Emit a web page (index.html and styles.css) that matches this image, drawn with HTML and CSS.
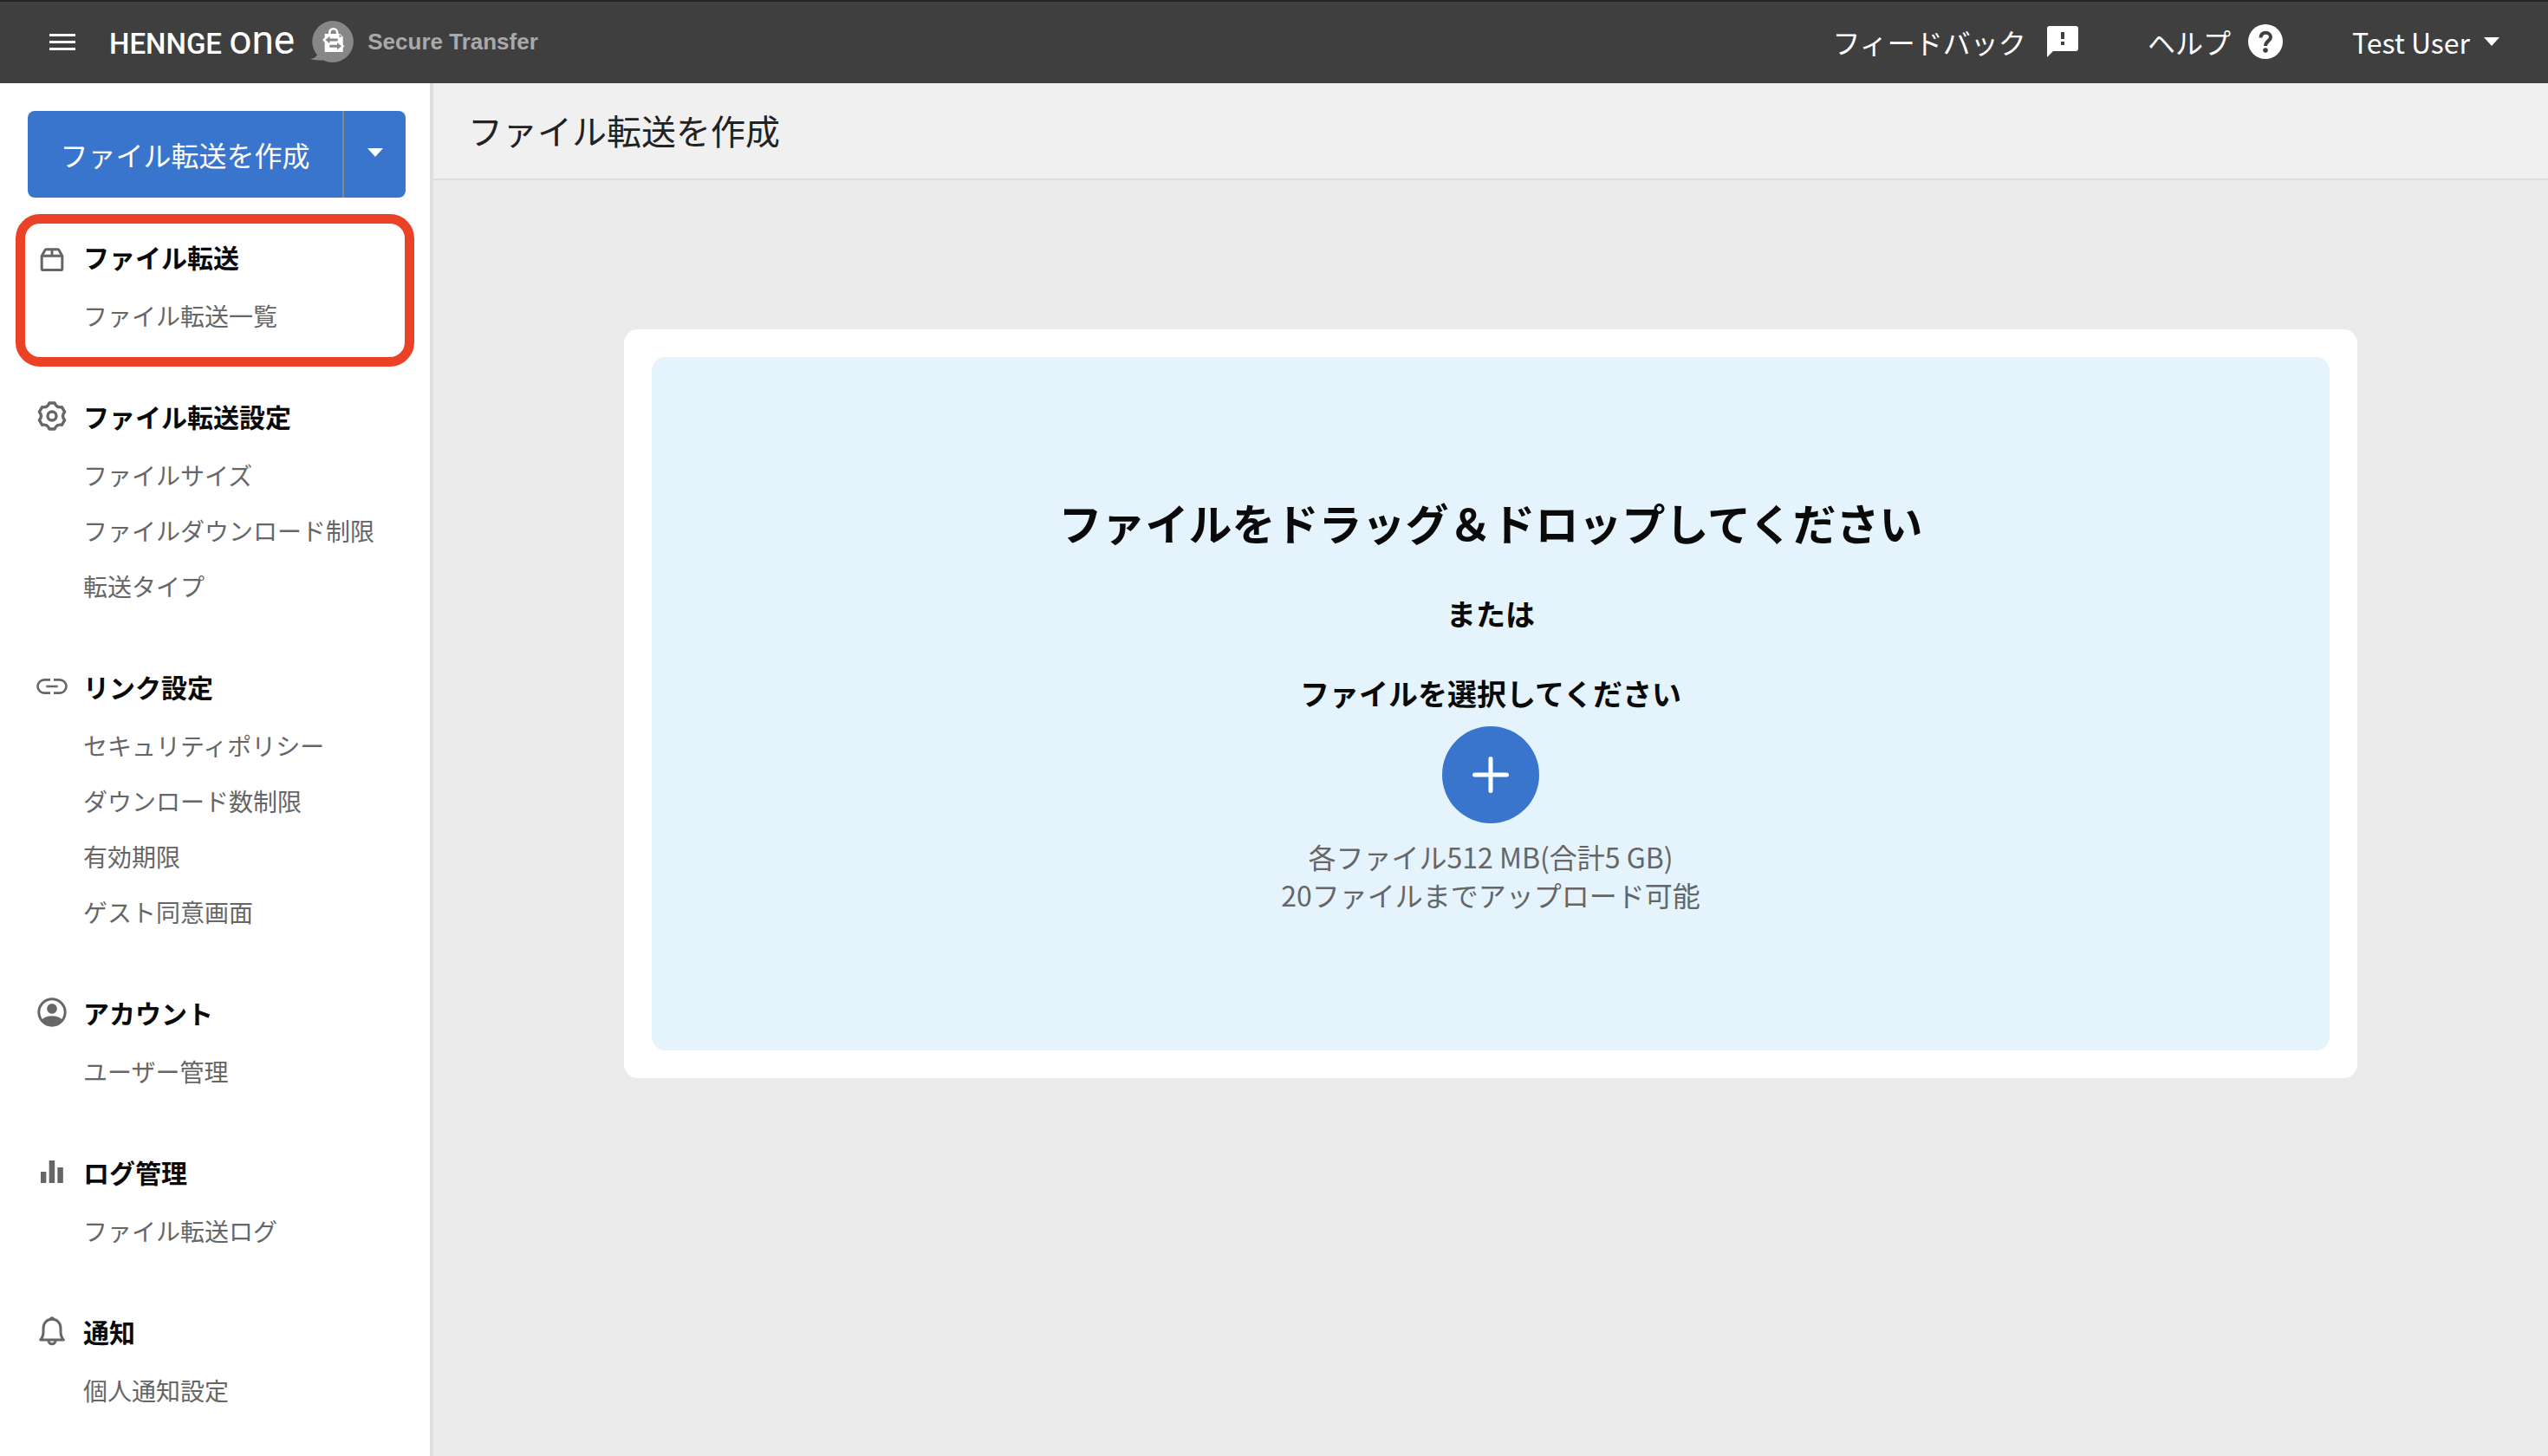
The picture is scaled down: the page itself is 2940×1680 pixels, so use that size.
FILE: index.html
```html
<!DOCTYPE html>
<html lang="ja">
<head>
<meta charset="utf-8">
<meta name="viewport" content="width=device-width, initial-scale=1">
<title>HENNGE One Secure Transfer</title>
<link rel="stylesheet" href="styles.css">
</head>
<body>
<header class="topbar">
  <button class="menu-button" type="button" aria-label="メニュー">
    <svg class="icon" viewBox="0 0 40 40" aria-hidden="true"><path fill="currentColor" d="M5 11h30v3H5zM5 19h30v3H5zM5 27h30v3H5z"/></svg>
  </button>
  <a class="brand" href="#">
    <span class="brand-name">HENNGE <span class="brand-one">one</span></span>
    <svg class="brand-badge" viewBox="0 0 52 48" aria-hidden="true">
      <path fill="#878787" d="M26 0a24 24 0 1 1-11 45.400Q8 46.200 0 44q6-1 8-4.500A24 24 0 0 1 26 0z"/>
      <path fill="none" stroke="#fff" stroke-width="2.600" d="M22.300 16v-2.400a4.400 4.400 0 0 1 8.800 0V16"/>
      <path fill="#fff" d="M16.700 15h17.500l3.500 3.500V36h-21z"/>
      <path fill="#fff" d="M14 22l5-5v10zM39.500 29.300l-5-5v10z"/>
      <path fill="#878787" d="M17.500 22l5-4.200v2.700h9.200v3h-9.200v2.700zM36 29.300l-5-4.200v2.700h-8.700v3H31v2.700zM33.500 15.500l3.200 3.200h-3.200z"/>
    </svg>
    <span class="brand-product">Secure Transfer</span>
  </a>
  <nav class="topbar-actions" aria-label="ユーティリティ">
    <a class="topbar-link" href="#">フィードバック
      <svg class="feedback-icon" viewBox="0 0 36 36" aria-hidden="true"><path fill="currentColor" fill-rule="evenodd" d="M3 0h30a3 3 0 0 1 3 3v23a3 3 0 0 1-3 3H7l-7 7V3a3 3 0 0 1 3-3zM16 7v8h4V7zM16 18v4h4v-4z"/></svg>
    </a>
    <a class="topbar-link help-link" href="#">ヘルプ
      <svg class="icon" viewBox="0 0 40 40" aria-hidden="true"><circle cx="20" cy="20" r="20" fill="currentColor"/><path fill="none" stroke="#3f3f3f" stroke-width="4" d="M14.500 15.500c0-8 11.500-7 11.500-.5 0 4-6 4.500-6 10"/><circle cx="20" cy="30" r="2.800" fill="#3f3f3f"/></svg>
    </a>
    <button class="topbar-link user-button" type="button">Test User
      <svg class="caret" viewBox="0 0 18 10" aria-hidden="true"><path fill="currentColor" d="M0 0h18l-9 10z"/></svg>
    </button>
  </nav>
</header>

<div class="layout">
  <aside class="sidebar">
    <div class="create">
      <button class="create-main" type="button">ファイル転送を作成</button>
      <button class="create-more" type="button" aria-label="その他">
        <svg class="caret" viewBox="0 0 18 10" aria-hidden="true"><path fill="currentColor" d="M0 0h18l-9 10z"/></svg>
      </button>
    </div>
    <nav class="menu" aria-label="メインメニュー">
      <section class="group group-marked">
        <h2 class="group-title">
          <svg class="icon" viewBox="0 0 24 24" aria-hidden="true"><g fill="none" stroke="currentColor" stroke-width="1.800" stroke-linejoin="round"><path d="M4.900 11.600h14.200v8.900q0 .8-.8.800H5.700q-.8 0-.8-.8z"/><path d="M4.900 11.600l2.400-4.200q.3-.4.800-.4h7.800q.5 0 .8.400l2.400 4.200M12 7v4.600"/></g></svg>
          ファイル転送
        </h2>
        <ul class="group-list">
          <li><a href="#">ファイル転送一覧</a></li>
        </ul>
      </section>
      <section class="group">
        <h2 class="group-title">
          <svg class="icon" viewBox="0 0 24 24" aria-hidden="true"><g fill="none" stroke="currentColor" stroke-width="2" stroke-linejoin="round"><path d="M10.100 3h3.800Q15.100 6.600 18.800 5.800L20.800 9.200Q18.200 12 20.800 14.800L18.800 18.200Q15.100 17.400 13.900 21H10.100Q8.900 17.400 5.200 18.200L3.200 14.800Q5.800 12 3.200 9.200L5.200 5.800Q8.900 6.600 10.100 3z"/><circle cx="12" cy="12" r="3"/></g></svg>
          ファイル転送設定
        </h2>
        <ul class="group-list">
          <li><a href="#">ファイルサイズ</a></li>
          <li><a href="#">ファイルダウンロード制限</a></li>
          <li><a href="#">転送タイプ</a></li>
        </ul>
      </section>
      <section class="group">
        <h2 class="group-title">
          <svg class="icon" viewBox="0 0 24 24" aria-hidden="true"><path fill="none" stroke="currentColor" stroke-width="1.600" d="M10.800 7.400H6.700a4.600 4.600 0 0 0 0 9.200h4.100M13.200 7.400h4.100a4.600 4.600 0 0 1 0 9.200h-4.100M8 12h8"/></svg>
          リンク設定
        </h2>
        <ul class="group-list">
          <li><a href="#">セキュリティポリシー</a></li>
          <li><a href="#">ダウンロード数制限</a></li>
          <li><a href="#">有効期限</a></li>
          <li><a href="#">ゲスト同意画面</a></li>
        </ul>
      </section>
      <section class="group">
        <h2 class="group-title">
          <svg class="icon" viewBox="0 0 24 24" aria-hidden="true"><circle cx="12" cy="12" r="9.100" fill="none" stroke="currentColor" stroke-width="1.800"/><circle cx="12" cy="9.500" r="3.500" fill="currentColor"/><path fill="currentColor" d="M4.800 17.200Q7.600 14.600 12 14.600t7.200 2.600A9.400 9.400 0 0 1 4.800 17.200z"/></svg>
          アカウント
        </h2>
        <ul class="group-list">
          <li><a href="#">ユーザー管理</a></li>
        </ul>
      </section>
      <section class="group">
        <h2 class="group-title">
          <svg class="icon" viewBox="0 0 24 24" aria-hidden="true"><path fill="currentColor" d="M4.200 12H8v7.800H4.200zM10 4.200h3.900v15.600H10zM15.800 9h3.900v10.800h-3.900z"/></svg>
          ログ管理
        </h2>
        <ul class="group-list">
          <li><a href="#">ファイル転送ログ</a></li>
        </ul>
      </section>
      <section class="group">
        <h2 class="group-title">
          <svg class="icon" viewBox="0 0 24 24" aria-hidden="true"><path fill="none" stroke="currentColor" stroke-width="1.800" stroke-linejoin="round" d="M4 18Q6 16 6 12.500V10c0-3.700 2.400-6.200 6-6.200s6 2.500 6 6.200v2.500q0 3.500 2 5.500z"/><path fill="currentColor" d="M10.300 3.600a1.700 1.700 0 0 1 3.400 0z"/><path fill="none" stroke="currentColor" stroke-width="1.800" d="M9.600 18.500a2.400 2.400 0 0 0 4.800 0"/></svg>
          通知
        </h2>
        <ul class="group-list">
          <li><a href="#">個人通知設定</a></li>
        </ul>
      </section>
    </nav>
  </aside>

  <main class="content">
    <h1 class="page-title">ファイル転送を作成</h1>
    <div class="content-body">
      <section class="card">
        <div class="dropzone">
          <h2 class="drop-heading">ファイルをドラッグ＆ドロップしてください</h2>
          <p class="drop-sub">または</p>
          <p class="drop-sub">ファイルを選択してください</p>
          <button class="add-button" type="button" aria-label="ファイルを選択">
            <svg class="plus" viewBox="0 0 42 42" aria-hidden="true"><path fill="none" stroke="currentColor" stroke-width="5" stroke-linecap="round" d="M21 2.500v37M2.500 21h37"/></svg>
          </button>
          <p class="drop-note">各ファイル512 MB(合計5 GB)<br>20ファイルまでアップロード可能</p>
        </div>
      </section>
    </div>
  </main>
</div>
</body>
</html>
```

FILE: styles.css
```css
* {
  box-sizing: border-box;
}

body {
  display: flex;
  flex-direction: column;
  min-height: 100vh;
  margin: 0;
  background: #ebebeb;
  color: #0a0a0a;
  font-family: "Noto Sans CJK JP", sans-serif;
  font-size: 32px;
}

h1, h2, p, ul {
  margin: 0;
  padding: 0;
}

ul {
  list-style: none;
}

a {
  color: inherit;
  text-decoration: none;
}

button {
  padding: 0;
  border: 0;
  background: none;
  color: inherit;
  font: inherit;
  cursor: pointer;
}

svg {
  display: block;
  flex: none;
}

.icon {
  width: 40px;
  height: 40px;
}

.caret {
  width: 18px;
  height: 10px;
}

/* Top bar */
.topbar {
  display: flex;
  align-items: center;
  height: 96px;
  padding: 0 56px 2px 52px;
  border-top: 2px solid #222;
  background: #3f3f3f;
  color: #fff;
}

.brand {
  display: flex;
  align-items: center;
  margin-left: 34px;
}

.brand-name {
  font-family: Roboto, sans-serif;
  font-size: 33px;
  font-weight: 500;
  line-height: 60px;
}

.brand-one {
  font-size: 46px;
  font-weight: 400;
}

.brand-badge {
  width: 52px;
  height: 48px;
  margin: 0 14px 0 18px;
}

.brand-product {
  color: #a9a9a9;
  font-family: "Liberation Sans", sans-serif;
  font-size: 26px;
  font-weight: 700;
}

.topbar-actions {
  display: flex;
  align-items: center;
  gap: 80px;
  margin-left: auto;
}

.topbar-link {
  display: flex;
  align-items: center;
  gap: 24px;
}

.help-link {
  gap: 20px;
}

.user-button {
  gap: 16px;
}

.feedback-icon {
  width: 36px;
  height: 36px;
}

/* Page frame */
.layout {
  display: flex;
  flex: 1;
}

.sidebar {
  flex: none;
  width: 500px;
  padding: 32px 28px 32px 32px;
  border-right: 4px solid #dedede;
  background: #fff;
}

.create {
  display: flex;
  height: 100px;
  margin-bottom: 32px;
  border-radius: 8px;
  background: #3974cd;
  color: #fff;
}

.create-main {
  flex: 1;
}

.create-more {
  display: flex;
  align-items: center;
  justify-content: center;
  width: 73px;
  padding-bottom: 4px;
  border-left: 2px solid #888;
}

/* Side menu */
.menu {
  display: flex;
  flex-direction: column;
  gap: 48px;
}

.group {
  position: relative;
  padding-left: 8px;
}

.group-marked::after {
  content: "";
  position: absolute;
  inset: -13px -10px -27px -14px;
  border: 11px solid #eb4127;
  border-radius: 28px;
  pointer-events: none;
}

.group-title {
  display: flex;
  align-items: center;
  gap: 16px;
  height: 72px;
  font-size: 30px;
  font-weight: 700;
}

.group-title .icon {
  color: #666;
}

.group-list {
  padding-left: 56px;
  color: #666;
  font-size: 28px;
  line-height: 64px;
}

.group-list a {
  display: block;
}

/* Content */
.content {
  flex: 1;
  min-width: 0;
}

.page-title {
  padding: 0 40px 2px;
  border-bottom: 2px solid #dedede;
  background: #f0f0f0;
  color: #222;
  font-size: 40px;
  font-weight: 400;
  line-height: 108px;
}

.content-body {
  padding: 172px 220px;
}

.card {
  padding: 32px;
  border-radius: 16px;
  background: #fff;
}

.dropzone {
  display: flex;
  flex-direction: column;
  align-items: center;
  min-height: 800px;
  padding: 152px 32px;
  border-radius: 16px;
  background: #e5f3fd;
  text-align: center;
}

.drop-heading {
  font-size: 50px;
  font-weight: 700;
  line-height: 76px;
}

.drop-sub {
  margin-top: 44px;
  font-size: 34px;
  font-weight: 700;
  line-height: 48px;
}

.add-button {
  display: flex;
  align-items: center;
  justify-content: center;
  width: 112px;
  height: 112px;
  margin: 14px 0 16px;
  border-radius: 50%;
  background: #3974cd;
  color: #fff;
}

.plus {
  width: 42px;
  height: 42px;
}

.drop-note {
  color: #666;
  line-height: 44px;
}
```
